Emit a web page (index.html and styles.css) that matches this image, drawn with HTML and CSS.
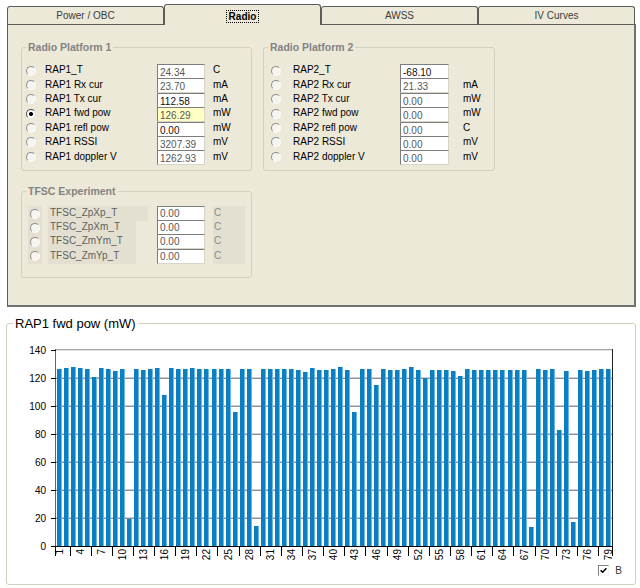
FILE: index.html
```html
<!DOCTYPE html>
<html lang="en">
<head>
<meta charset="utf-8">
<title>Radio</title>
<link rel="stylesheet" href="styles.css">
</head>
<body>
<div class="tabs">
  <div class="tab">Power / OBC</div>
  <div class="tab active"><span class="focus">Radio</span></div>
  <div class="tab">AWSS</div>
  <div class="tab">IV Curves</div>
</div>
<div class="panel">
  <div class="top-groups">
    <fieldset class="grp g1">
      <legend>Radio Platform 1</legend>
      <div class="rows">
        <div class="row"><span class="radio"></span><span class="lbl">RAP1_T</span><span class="val">24.34</span><span class="unit">C</span></div>
        <div class="row"><span class="radio"></span><span class="lbl">RAP1 Rx cur</span><span class="val">23.70</span><span class="unit">mA</span></div>
        <div class="row"><span class="radio"></span><span class="lbl">RAP1 Tx cur</span><span class="val dark">112.58</span><span class="unit">mA</span></div>
        <div class="row"><span class="radio on"></span><span class="lbl">RAP1 fwd pow</span><span class="val sel">126.29</span><span class="unit">mW</span></div>
        <div class="row"><span class="radio"></span><span class="lbl">RAP1 refl pow</span><span class="val dark">0.00</span><span class="unit">mW</span></div>
        <div class="row"><span class="radio"></span><span class="lbl">RAP1 RSSI</span><span class="val">3207.39</span><span class="unit">mV</span></div>
        <div class="row"><span class="radio"></span><span class="lbl">RAP1 doppler V</span><span class="val">1262.93</span><span class="unit">mV</span></div>
      </div>
    </fieldset>
    <fieldset class="grp g2">
      <legend>Radio Platform 2</legend>
      <div class="rows">
        <div class="row"><span class="radio"></span><span class="lbl">RAP2_T</span><span class="val dark">-68.10</span><span class="unit"></span></div>
        <div class="row"><span class="radio"></span><span class="lbl">RAP2 Rx cur</span><span class="val">21.33</span><span class="unit">mA</span></div>
        <div class="row"><span class="radio"></span><span class="lbl">RAP2 Tx cur</span><span class="val">0.00</span><span class="unit">mW</span></div>
        <div class="row"><span class="radio"></span><span class="lbl">RAP2 fwd pow</span><span class="val">0.00</span><span class="unit">mW</span></div>
        <div class="row"><span class="radio"></span><span class="lbl">RAP2 refl pow</span><span class="val">0.00</span><span class="unit">C</span></div>
        <div class="row"><span class="radio"></span><span class="lbl">RAP2 RSSI</span><span class="val">0.00</span><span class="unit">mV</span></div>
        <div class="row"><span class="radio"></span><span class="lbl">RAP2 doppler V</span><span class="val">0.00</span><span class="unit">mV</span></div>
      </div>
    </fieldset>
  </div>
  <fieldset class="grp tfsc">
    <legend>TFSC Experiment</legend>
    <div class="rows">
      <div class="row"><span class="rcell"><span class="radio"></span></span><span class="lbl wide">TFSC_ZpXp_T</span><span class="val">0.00</span><span class="unit">C</span></div>
      <div class="row"><span class="rcell"><span class="radio"></span></span><span class="lbl">TFSC_ZpXm_T</span><span class="val">0.00</span><span class="unit">C</span></div>
      <div class="row"><span class="rcell"><span class="radio"></span></span><span class="lbl">TFSC_ZmYm_T</span><span class="val">0.00</span><span class="unit">C</span></div>
      <div class="row"><span class="rcell"><span class="radio"></span></span><span class="lbl">TFSC_ZmYp_T</span><span class="val">0.00</span><span class="unit">C</span></div>
    </div>
  </fieldset>
</div>

<fieldset class="chart">
  <legend>RAP1 fwd pow (mW)</legend>
  <svg class="plot" width="628" height="229" viewBox="7 331 628 229" xmlns="http://www.w3.org/2000/svg">
    <defs>
      <linearGradient id="bar" x1="0" x2="1" y1="0" y2="0">
        <stop offset="0" stop-color="#0a7fc3"/>
        <stop offset="0.74" stop-color="#0a7fc3"/>
        <stop offset="0.8" stop-color="#6cb7e4"/>
        <stop offset="1" stop-color="#6cb7e4"/>
      </linearGradient>
    </defs>
    <rect class="frame-top" x="56" y="349" width="556" height="1"/>
    <rect class="frame-top2" x="56" y="350" width="556" height="1"/>
    <g class="grid">
      <rect x="56" y="377" width="556" height="1" class="gl"/><rect x="56" y="378" width="556" height="1" class="gd"/>
      <rect x="56" y="405" width="556" height="1" class="gl"/><rect x="56" y="406" width="556" height="1" class="gd"/>
      <rect x="56" y="433" width="556" height="1" class="gl"/><rect x="56" y="434" width="556" height="1" class="gd"/>
      <rect x="56" y="461" width="556" height="1" class="gl"/><rect x="56" y="462" width="556" height="1" class="gd"/>
      <rect x="56" y="489" width="556" height="1" class="gl"/><rect x="56" y="490" width="556" height="1" class="gd"/>
      <rect x="56" y="517" width="556" height="1" class="gl"/><rect x="56" y="518" width="556" height="1" class="gd"/>
    </g>
    <g class="bars">
      <rect x="57" y="369" width="5" height="177"/>
      <rect x="64" y="368" width="5" height="178"/>
      <rect x="71" y="367" width="5" height="179"/>
      <rect x="78" y="368" width="5" height="178"/>
      <rect x="85" y="369" width="5" height="177"/>
      <rect x="92" y="377" width="5" height="169"/>
      <rect x="99" y="368" width="5" height="178"/>
      <rect x="106" y="369" width="5" height="177"/>
      <rect x="113" y="371" width="5" height="175"/>
      <rect x="120" y="369" width="5" height="177"/>
      <rect x="127" y="519" width="5" height="27"/>
      <rect x="134" y="369" width="5" height="177"/>
      <rect x="141" y="370" width="5" height="176"/>
      <rect x="148" y="369" width="5" height="177"/>
      <rect x="155" y="368" width="5" height="178"/>
      <rect x="162" y="395" width="5" height="151"/>
      <rect x="169" y="368" width="5" height="178"/>
      <rect x="176" y="369" width="5" height="177"/>
      <rect x="183" y="369" width="5" height="177"/>
      <rect x="190" y="368" width="5" height="178"/>
      <rect x="197" y="369" width="5" height="177"/>
      <rect x="204" y="369" width="5" height="177"/>
      <rect x="212" y="369" width="5" height="177"/>
      <rect x="219" y="369" width="5" height="177"/>
      <rect x="226" y="369" width="5" height="177"/>
      <rect x="233" y="412" width="5" height="134"/>
      <rect x="240" y="369" width="5" height="177"/>
      <rect x="247" y="369" width="5" height="177"/>
      <rect x="254" y="526" width="5" height="20"/>
      <rect x="261" y="369" width="5" height="177"/>
      <rect x="268" y="369" width="5" height="177"/>
      <rect x="275" y="369" width="5" height="177"/>
      <rect x="282" y="369" width="5" height="177"/>
      <rect x="289" y="369" width="5" height="177"/>
      <rect x="296" y="370" width="5" height="176"/>
      <rect x="303" y="372" width="5" height="174"/>
      <rect x="310" y="368" width="5" height="178"/>
      <rect x="317" y="370" width="5" height="176"/>
      <rect x="324" y="370" width="5" height="176"/>
      <rect x="331" y="369" width="5" height="177"/>
      <rect x="338" y="367" width="5" height="179"/>
      <rect x="345" y="370" width="5" height="176"/>
      <rect x="352" y="412" width="5" height="134"/>
      <rect x="360" y="369" width="5" height="177"/>
      <rect x="367" y="369" width="5" height="177"/>
      <rect x="374" y="385" width="5" height="161"/>
      <rect x="381" y="369" width="5" height="177"/>
      <rect x="388" y="370" width="5" height="176"/>
      <rect x="395" y="370" width="5" height="176"/>
      <rect x="402" y="369" width="5" height="177"/>
      <rect x="409" y="367" width="5" height="179"/>
      <rect x="416" y="370" width="5" height="176"/>
      <rect x="423" y="378" width="5" height="168"/>
      <rect x="430" y="370" width="5" height="176"/>
      <rect x="437" y="370" width="5" height="176"/>
      <rect x="444" y="370" width="5" height="176"/>
      <rect x="451" y="371" width="5" height="175"/>
      <rect x="458" y="376" width="5" height="170"/>
      <rect x="465" y="369" width="5" height="177"/>
      <rect x="472" y="370" width="5" height="176"/>
      <rect x="479" y="370" width="5" height="176"/>
      <rect x="486" y="370" width="5" height="176"/>
      <rect x="493" y="370" width="5" height="176"/>
      <rect x="500" y="370" width="5" height="176"/>
      <rect x="508" y="370" width="5" height="176"/>
      <rect x="515" y="370" width="5" height="176"/>
      <rect x="522" y="370" width="5" height="176"/>
      <rect x="529" y="527" width="5" height="19"/>
      <rect x="536" y="369" width="5" height="177"/>
      <rect x="543" y="370" width="5" height="176"/>
      <rect x="550" y="369" width="5" height="177"/>
      <rect x="557" y="430" width="5" height="116"/>
      <rect x="564" y="371" width="5" height="175"/>
      <rect x="571" y="522" width="5" height="24"/>
      <rect x="578" y="370" width="5" height="176"/>
      <rect x="585" y="371" width="5" height="175"/>
      <rect x="592" y="370" width="5" height="176"/>
      <rect x="599" y="369" width="5" height="177"/>
      <rect x="606" y="369" width="5" height="177"/>
    </g>
    <rect class="axis-y" x="55" y="349" width="1" height="198"/>
    <rect class="frame-right" x="612" y="349" width="1" height="198"/>
    <rect class="axis-x" x="55" y="546" width="558" height="1"/>
    <g class="ticks">
      <rect x="51" y="350" width="5" height="1"/><rect x="51" y="378" width="5" height="1"/>
      <rect x="51" y="406" width="5" height="1"/><rect x="51" y="434" width="5" height="1"/>
      <rect x="51" y="462" width="5" height="1"/><rect x="51" y="490" width="5" height="1"/>
      <rect x="51" y="518" width="5" height="1"/><rect x="51" y="546" width="5" height="1"/>
      <rect x="55" y="546" width="1" height="10"/><rect x="70" y="546" width="1" height="10"/>
      <rect x="91" y="546" width="1" height="10"/><rect x="112" y="546" width="1" height="10"/>
      <rect x="133" y="546" width="1" height="10"/><rect x="154" y="546" width="1" height="10"/>
      <rect x="175" y="546" width="1" height="10"/><rect x="196" y="546" width="1" height="10"/>
      <rect x="217" y="546" width="1" height="10"/><rect x="239" y="546" width="1" height="10"/>
      <rect x="260" y="546" width="1" height="10"/><rect x="281" y="546" width="1" height="10"/>
      <rect x="302" y="546" width="1" height="10"/><rect x="323" y="546" width="1" height="10"/>
      <rect x="344" y="546" width="1" height="10"/><rect x="365" y="546" width="1" height="10"/>
      <rect x="387" y="546" width="1" height="10"/><rect x="408" y="546" width="1" height="10"/>
      <rect x="429" y="546" width="1" height="10"/><rect x="450" y="546" width="1" height="10"/>
      <rect x="471" y="546" width="1" height="10"/><rect x="492" y="546" width="1" height="10"/>
      <rect x="513" y="546" width="1" height="10"/><rect x="535" y="546" width="1" height="10"/>
      <rect x="556" y="546" width="1" height="10"/><rect x="577" y="546" width="1" height="10"/>
      <rect x="598" y="546" width="1" height="10"/><rect x="612" y="546" width="1" height="10"/>
    </g>
    <g class="ylab">
      <text x="46" y="354">140</text>
      <text x="46" y="382">120</text>
      <text x="46" y="410">100</text>
      <text x="46" y="438">80</text>
      <text x="46" y="466">60</text>
      <text x="46" y="494">40</text>
      <text x="46" y="522">20</text>
      <text x="46" y="550">0</text>
    </g>
    <g class="xlab">
      <text transform="translate(63 549) rotate(-90)">1</text>
      <text transform="translate(84 549) rotate(-90)">4</text>
      <text transform="translate(105 549) rotate(-90)">7</text>
      <text transform="translate(126 549) rotate(-90)">10</text>
      <text transform="translate(147 549) rotate(-90)">13</text>
      <text transform="translate(168 549) rotate(-90)">16</text>
      <text transform="translate(189 549) rotate(-90)">19</text>
      <text transform="translate(210 549) rotate(-90)">22</text>
      <text transform="translate(232 549) rotate(-90)">25</text>
      <text transform="translate(253 549) rotate(-90)">28</text>
      <text transform="translate(274 549) rotate(-90)">31</text>
      <text transform="translate(295 549) rotate(-90)">34</text>
      <text transform="translate(316 549) rotate(-90)">37</text>
      <text transform="translate(337 549) rotate(-90)">40</text>
      <text transform="translate(358 549) rotate(-90)">43</text>
      <text transform="translate(380 549) rotate(-90)">46</text>
      <text transform="translate(401 549) rotate(-90)">49</text>
      <text transform="translate(422 549) rotate(-90)">52</text>
      <text transform="translate(443 549) rotate(-90)">55</text>
      <text transform="translate(464 549) rotate(-90)">58</text>
      <text transform="translate(485 549) rotate(-90)">61</text>
      <text transform="translate(506 549) rotate(-90)">64</text>
      <text transform="translate(528 549) rotate(-90)">67</text>
      <text transform="translate(549 549) rotate(-90)">70</text>
      <text transform="translate(570 549) rotate(-90)">73</text>
      <text transform="translate(591 549) rotate(-90)">76</text>
      <text transform="translate(612 549) rotate(-90)">79</text>
    </g>
  </svg>
  <div class="legend-row">
    <span class="check"><svg width="7" height="7" viewBox="0 0 7 7"><path d="M0.6 3.2 L2.6 5.2 L6.4 1.2" fill="none" stroke="#000" stroke-width="1.6"/></svg></span>
    <span class="legend-name">B</span>
  </div>
</fieldset>
</body>
</html>
```

FILE: styles.css
```css
* { box-sizing: border-box; }
html, body { margin: 0; padding: 0; background: #fff; }
body {
  width: 640px;
  height: 588px;
  overflow: hidden;
  font-family: "Liberation Sans", Arial, sans-serif;
  font-size: 10px;
  color: #000;
}

/* ---------- tabs ---------- */
.tabs {
  display: flex;
  align-items: flex-end;
  height: 24px;
  padding-left: 7px;
}
.tab {
  width: 157px;
  height: 18px;
  border: 1px solid #5c5c5c;
  border-bottom: 0;
  border-radius: 3px 3px 0 0;
  background: #ece9d8;
  display: flex;
  align-items: center;
  justify-content: center;
  color: #3c3c3c;
}
.tab.active {
  height: 21px;
  margin-bottom: -1px;
  z-index: 1;
  padding-top: 2px;
  font-weight: bold;
  color: #000;
}
.focus {
  outline: 1px dotted #000;
  padding: 0 2px;
  line-height: 11px;
}

/* ---------- panel ---------- */
.panel {
  margin-left: 7px;
  width: 629px;
  height: 283px;
  background: #ece9d8;
  border-top: 1px solid #5c5c5c;
  border-left: 1px solid #5c5c5c;
  border-right: 2px solid #717171;
  border-bottom: 2px solid #717171;
  display: flex;
  flex-direction: column;
  align-items: flex-start;
}
.top-groups {
  display: flex;
  gap: 11px;
  margin: 16px 0 0 13px;
}

fieldset {
  margin: 0;
  padding: 0;
  min-width: 0;
  border: 1px solid #d0d0bf;
  border-radius: 3px;
}
.grp legend {
  margin-left: 4px;
  padding: 0 2px;
  font-size: 10.5px;
  line-height: 13px;
  font-weight: bold;
  color: #838383;
}
.g1 { width: 231px; height: 130px; }
.g2 { width: 232px; height: 130px; }

.rows { margin-top: 8px; }
.row {
  display: grid;
  height: 14.4px;
  align-items: center;
}
.g1 .row { grid-template-columns: 19px 112px 48px auto; padding-left: 4px; }
.g2 .row { grid-template-columns: 22px 107px 49px auto; padding-left: 7px; }
.g1 .unit { padding-left: 8px; }
.g2 .unit { padding-left: 14px; }

.lbl { line-height: 14.4px; white-space: nowrap; }
.unit { line-height: 14.4px; }

.radio {
  display: block;
  width: 10px;
  height: 10px;
  border-radius: 50%;
  border: 1px solid;
  border-color: #8e8e8e #fbfbfb #fbfbfb #8e8e8e;
  background: #f6f5f0;
}
.radio.on {
  border-color: #4c4c4c #e8e8e8 #e8e8e8 #4c4c4c;
  background: radial-gradient(circle, #000 0 1.7px, #fff 2.3px);
}

.val {
  align-self: start;
  margin-top: 2px;
  height: 15px;
  border: 1px solid;
  border-color: #7d7d7d #d8d5c8 #d8d5c8 #7d7d7d;
  background: #fff;
  padding: 3px 0 0 2px;
  line-height: 10px;
  color: #575757;
  white-space: nowrap;
}
.val.dark { color: #111; }
.val.sel { background: #ffffc4; }

/* ---------- TFSC ---------- */
.tfsc { margin: 14px 0 0 13px; width: 231px; height: 93px; }
.tfsc .row {
  grid-template-columns: 14px 6px 109px 48px 8px 32px;
  padding-left: 6px;
  height: 14.2px;
  align-items: stretch;
}
.tfsc .rcell {
  grid-column: 1;
  background: #e3e0d1;
  display: flex;
  align-items: center;
  justify-content: center;
}
.tfsc .lbl {
  grid-column: 3;
  width: 88px;
  background: #e3e0d1;
  padding-left: 2px;
  line-height: 14.2px;
  color: #5e5e5e;
}
.tfsc .lbl.wide { width: 100px; }
.tfsc .val {
  grid-column: 4;
  margin-top: 0;
  padding-top: 2px;
}
.tfsc .unit {
  grid-column: 6;
  background: #e3e0d1;
  color: #8a8a8a;
  padding-left: 1px;
  line-height: 14.2px;
}

/* ---------- chart ---------- */
.chart {
  margin: 9px 0 0 6px;
  width: 630px;
  height: 269px;
  background: #fff;
}
.chart legend {
  margin-left: 6px;
  padding: 0 2px;
  font-size: 13px;
  line-height: 15px;
  color: #000;
}
.plot { display: block; }
.plot text { font-family: "Liberation Sans", Arial, sans-serif; font-size: 10px; fill: #000; }
.ylab text { text-anchor: end; }
.xlab text { text-anchor: end; }
.bars rect { fill: url(#bar); }
.gl { fill: #cbcbcb; }
.gd { fill: #939393; }
.frame-top { fill: #a9a9a9; }
.frame-top2 { fill: #dedede; }
.frame-right { fill: #222; }
.axis-y { fill: #666; }
.axis-x { fill: #000; }
.ticks rect { fill: #000; }

.legend-row {
  display: flex;
  justify-content: flex-end;
  align-items: center;
  gap: 6px;
  padding: 5px 13px 0 0;
}
.check {
  width: 11px;
  height: 11px;
  border: 1px solid;
  border-color: #7f7f7f #f4f4f4 #f4f4f4 #7f7f7f;
  background: #fff;
  display: flex;
  align-items: center;
  justify-content: center;
}
.check svg { display: block; }
.legend-name { line-height: 11px; color: #333; }
```
